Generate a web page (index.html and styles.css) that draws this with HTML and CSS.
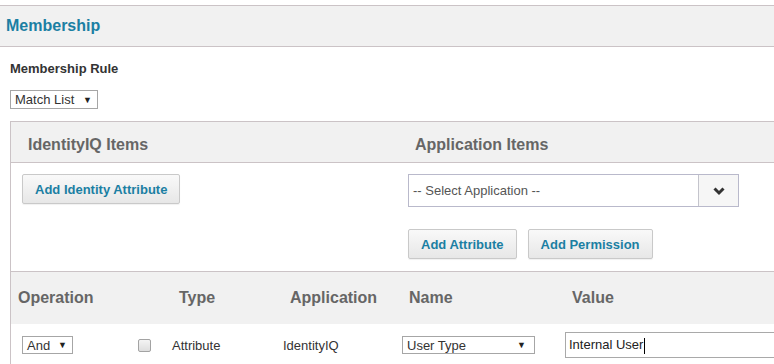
FILE: index.html
```html
<!DOCTYPE html>
<html lang="en">
<head>
    <meta charset="UTF-8">
    <meta name="viewport" content="width=device-width, initial-scale=1.0">
    <title>Membership</title>
    <link rel="stylesheet" href="styles.css">
</head>
<body>
    <div class="page">
        <h2 class="section-title">Membership</h2>

        <div class="rule">
            <div class="rule-label">Membership Rule</div>
            <div class="dropdown dropdown-match">
                <span>Match List</span>
                <span class="arrow">&#9660;</span>
            </div>
        </div>

        <div class="panel">
            <div class="panel-head">
                <h3 class="col-title col-title-left">IdentityIQ Items</h3>
                <h3 class="col-title col-title-right">Application Items</h3>
            </div>

            <div class="panel-body">
                <div class="col-left">
                    <button class="btn">Add Identity Attribute</button>
                </div>
                <div class="col-right">
                    <div class="app-select">
                        <span class="app-select-text">-- Select Application --</span>
                        <span class="app-select-toggle">
                            <svg width="14" height="10" viewBox="0 0 14 10">
                                <polyline points="2.5,2.5 7,7 11.5,2.5" fill="none" stroke="#333" stroke-width="3"/>
                            </svg>
                        </span>
                    </div>
                    <div class="btn-row">
                        <button class="btn">Add Attribute</button>
                        <button class="btn">Add Permission</button>
                    </div>
                </div>
            </div>

            <table class="filters">
                <colgroup>
                    <col class="c-op">
                    <col class="c-check">
                    <col class="c-type">
                    <col class="c-app">
                    <col class="c-name">
                    <col>
                </colgroup>
                <thead>
                    <tr>
                        <th class="th-op">Operation</th>
                        <th></th>
                        <th>Type</th>
                        <th>Application</th>
                        <th>Name</th>
                        <th>Value</th>
                    </tr>
                </thead>
                <tbody>
                    <tr>
                        <td class="td-op">
                            <div class="dropdown dropdown-and">
                                <span>And</span>
                                <span class="arrow">&#9660;</span>
                            </div>
                        </td>
                        <td class="td-check"><span class="checkbox"></span></td>
                        <td>Attribute</td>
                        <td>IdentityIQ</td>
                        <td>
                            <div class="dropdown dropdown-name">
                                <span>User Type</span>
                                <span class="arrow">&#9660;</span>
                            </div>
                        </td>
                        <td>
                            <div class="text-input">Internal User<span class="caret"></span></div>
                        </td>
                    </tr>
                </tbody>
            </table>
        </div>
    </div>
</body>
</html>
```

FILE: styles.css
```css
:root {
    --border: #cbc3c6;
    --band: #f1f1f1;
    --teal: #1b7fa3;
    --heading: #666666;
    --text: #333333;
}

html, body {
    margin: 0;
    padding: 0;
    overflow: hidden;
}

body {
    font-family: "Liberation Sans", Arial, sans-serif;
    color: var(--text);
    background: #ffffff;
}

.page {
    width: 774px;
    padding-top: 5px;
}

.section-title {
    margin: 0;
    padding: 11px 6px;
    height: 18px;
    line-height: 18px;
    font-size: 16px;
    font-weight: bold;
    color: var(--teal);
    background: var(--band);
    border-top: 1px solid var(--border);
    border-bottom: 1px solid var(--border);
}

.rule {
    padding-left: 10px;
}

.rule-label {
    margin-top: 14px;
    font-size: 13px;
    line-height: 16px;
    font-weight: bold;
    color: var(--text);
}

.dropdown {
    display: flex;
    align-items: center;
    justify-content: space-between;
    box-sizing: border-box;
    height: 19px;
    padding: 0 5px 0 4px;
    border: 1px solid #a6a6a6;
    background: #ffffff;
    font-size: 13px;
    color: var(--text);
}

.dropdown .arrow {
    font-size: 9px;
    color: #222;
}

.dropdown-match {
    width: 88px;
    margin-top: 13px;
}

.dropdown-and {
    width: 51px;
    height: 18px;
}

.dropdown-name {
    width: 133px;
    height: 18px;
    padding-right: 8px;
}

.panel {
    width: 764px;
    margin: 12px 0 0 10px;
    border-top: 1px solid var(--border);
    border-left: 1px solid var(--border);
}

.panel-head,
.panel-body {
    display: grid;
    grid-template-columns: 397px 1fr;
}

.panel-head {
    height: 40px;
    background: var(--band);
    border-bottom: 1px solid var(--border);
}

.col-title {
    margin: 0;
    padding-top: 14px;
    font-size: 16px;
    line-height: 18px;
    font-weight: bold;
    color: var(--heading);
}

.col-title-left { padding-left: 17px; }
.col-title-right { padding-left: 7px; }

.panel-body {
    padding: 11px 0 12px;
}

.col-left {
    padding-left: 11px;
}

.btn {
    box-sizing: border-box;
    height: 30px;
    padding: 0 12px;
    font-family: "Liberation Sans", Arial, sans-serif;
    font-size: 13px;
    font-weight: bold;
    color: var(--teal);
    background: linear-gradient(#f9f9f9, #e7e7e7);
    border: 1px solid #c9c9c9;
    border-radius: 2px;
    box-shadow: 0 1px 1px rgba(0, 0, 0, 0.06);
    cursor: pointer;
}

.app-select {
    display: flex;
    box-sizing: border-box;
    width: 331px;
    height: 33px;
    border: 1px solid #b9b9cb;
    background: #ffffff;
}

.app-select-text {
    flex: 1;
    padding-left: 4px;
    line-height: 31px;
    font-size: 13px;
    color: #555555;
}

.app-select-toggle {
    display: flex;
    align-items: center;
    justify-content: center;
    width: 39px;
    border-left: 1px solid #c4c4cc;
    background: #f6f6f6;
}

.btn-row {
    display: flex;
    gap: 11px;
    margin-top: 22px;
}

.filters {
    width: 100%;
    border-collapse: collapse;
    table-layout: fixed;
    border-top: 1px solid var(--border);
}

.c-op { width: 115px; }
.c-check { width: 40px; }
.c-type { width: 111px; }
.c-app { width: 119px; }
.c-name { width: 163px; }

.filters th {
    height: 52px;
    padding: 0 0 0 13px;
    text-align: left;
    vertical-align: middle;
    font-size: 16px;
    font-weight: bold;
    color: var(--heading);
    background: var(--band);
}

.filters th.th-op {
    padding-left: 7px;
}

.filters td {
    padding: 8px 0 8px 6px;
    vertical-align: middle;
    font-size: 13px;
    color: var(--text);
}

.filters td.td-op { padding-left: 11px; }
.filters td.td-check { padding-left: 12px; }

.checkbox {
    display: block;
    box-sizing: border-box;
    width: 13px;
    height: 13px;
    border: 1px solid #a3a3a3;
    border-radius: 2px;
    background: linear-gradient(#f4f4f4, #dedede);
}

.text-input {
    box-sizing: border-box;
    width: 100%;
    height: 26px;
    padding-left: 3px;
    line-height: 24px;
    border: 1px solid #a9a9a9;
    border-right: none;
    font-size: 13px;
    color: #222;
}

.caret {
    display: inline-block;
    width: 1px;
    height: 16px;
    margin-left: 1px;
    vertical-align: middle;
    background: #000;
}
```
